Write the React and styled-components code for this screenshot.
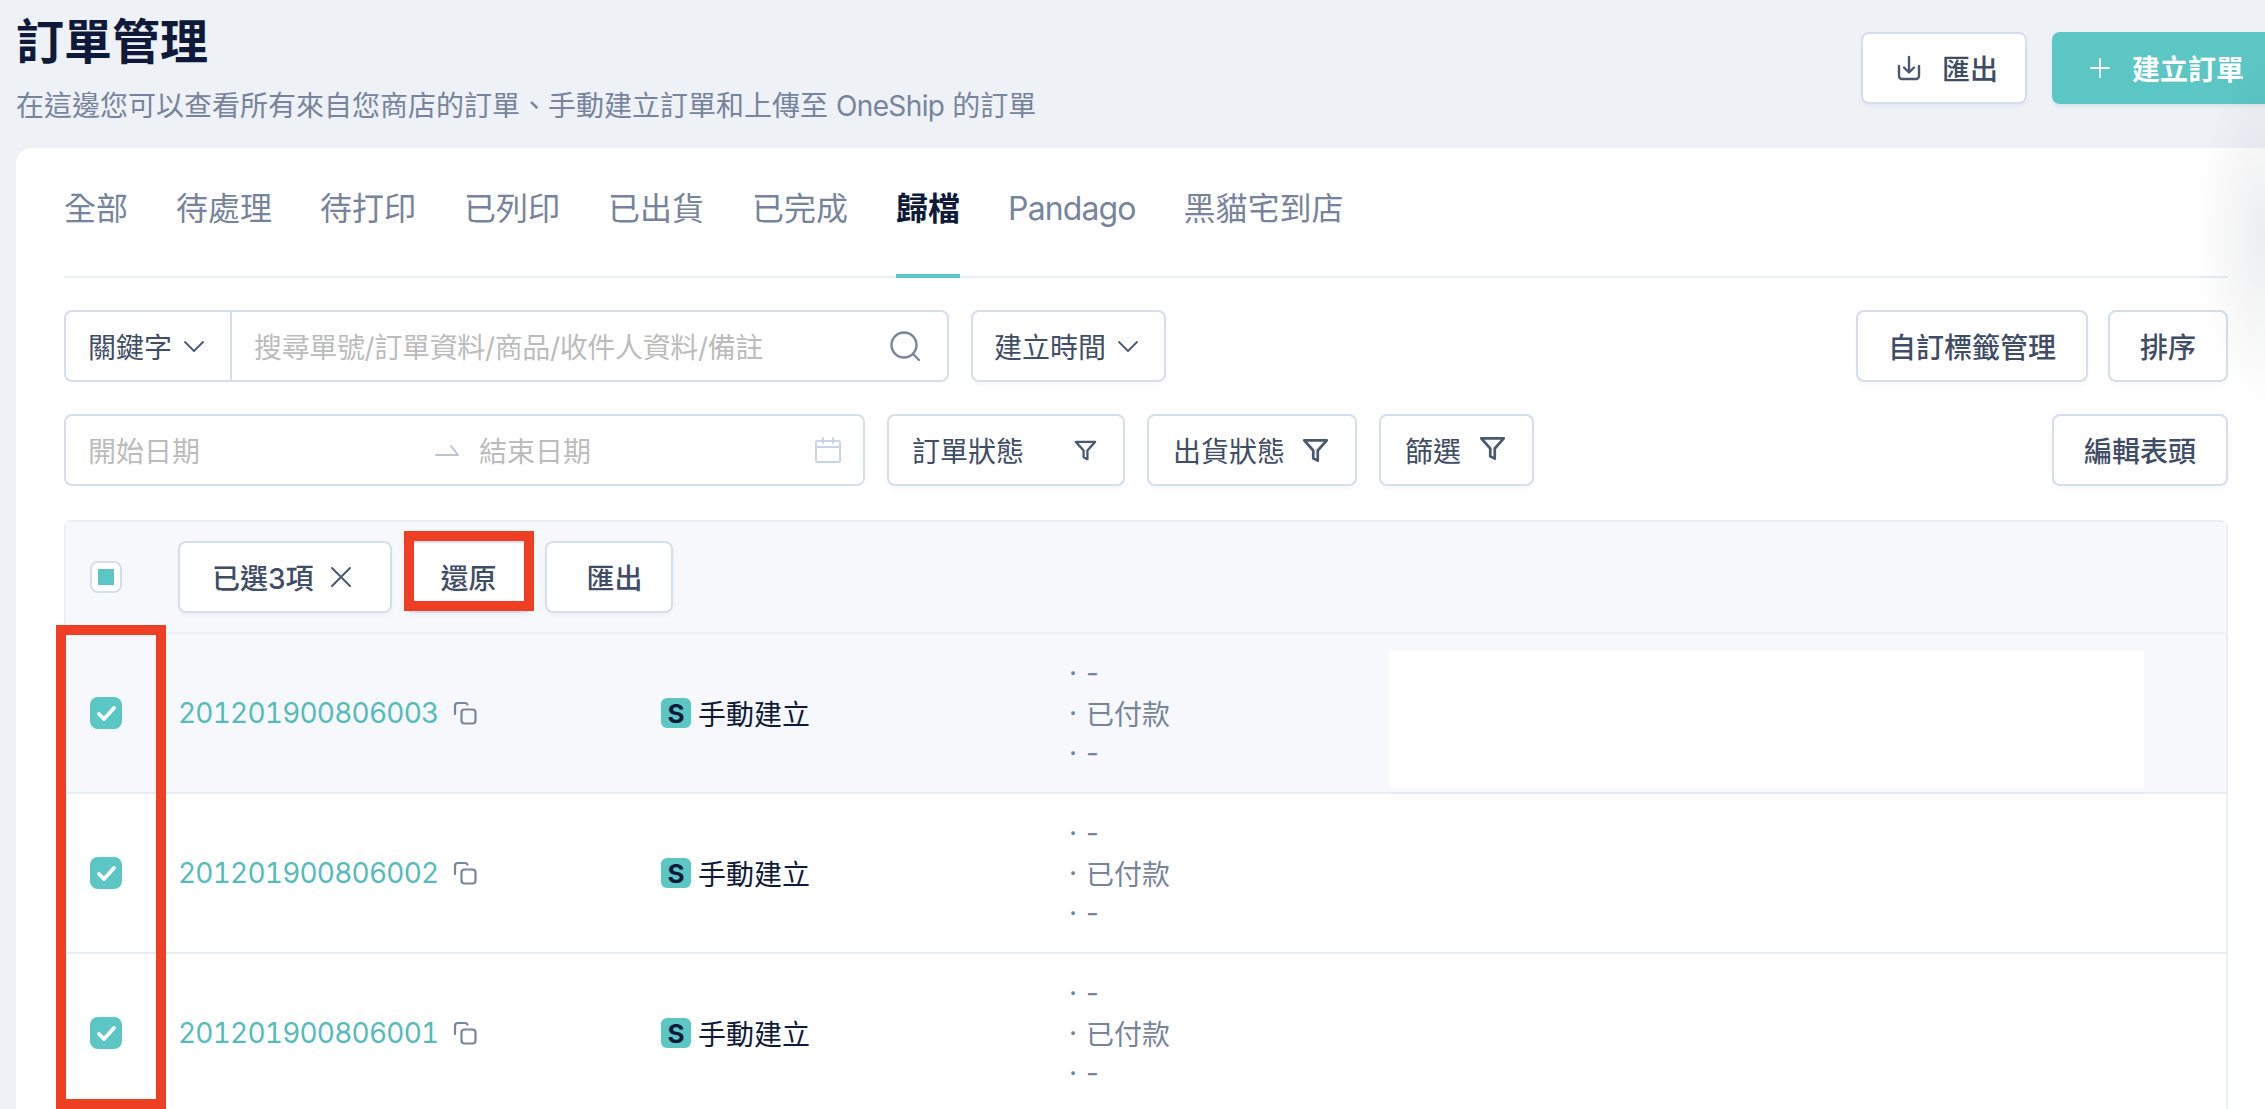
import React from "react";
import styled, { createGlobalStyle } from "styled-components";

const GlobalStyle = createGlobalStyle`
  html, body {
    margin: 0;
    padding: 0;
    background: #eef1f6;
  }
  body {
    font-family: Inter, "Noto Sans CJK TC", sans-serif;
    overflow: hidden;
  }
  * {
    box-sizing: border-box;
  }
`;

const Page = styled.div`
  position: relative;
  width: 2265px;
  height: 1109px;
  overflow: hidden;
  padding-left: 16px;
`;

const Inner = styled.div`
  width: 2260px;
`;

const Header = styled.header`
  display: flex;
  justify-content: space-between;
  height: 148px;
`;

const Title = styled.h1`
  margin: 10px 0 0;
  font-size: 48px;
  line-height: 64px;
  font-weight: 700;
  color: #0f1a3a;
`;

const Subtitle = styled.p`
  margin: 12px 0 0;
  font-size: 28px;
  line-height: 40px;
  color: #77849b;
  white-space: nowrap;
`;

const Latin = styled.span`
  letter-spacing: -0.6px;
`;

const HeaderActions = styled.div`
  display: flex;
  gap: 25px;
  padding-top: 32px;
`;

const Button = styled.button`
  display: flex;
  align-items: center;
  flex-shrink: 0;
  height: 72px;
  padding: 0 ${(p) => p.$right ?? 30}px 0 ${(p) => p.$left ?? 30}px;
  gap: ${(p) => p.$gap ?? 0}px;
  font-family: inherit;
  font-size: 28px;
  font-weight: ${(p) => p.$weight ?? 500};
  white-space: nowrap;
  color: #3f4d66;
  background: #fff;
  border: 2px solid #d5dfeb;
  border-radius: 8px;
  box-shadow: 0 3px 4px rgba(20, 40, 80, 0.03);
`;

const PrimaryButton = styled(Button)`
  color: #fff;
  background: #5bc6c4;
  border: 0;
  font-weight: 600;
  box-shadow: 0 3px 3px rgba(20, 40, 80, 0.06);
`;

const Card = styled.main`
  height: 961px;
  padding: 0 48px;
  background: #fff;
  border-radius: 16px 16px 0 0;
`;

const Tabs = styled.nav`
  display: flex;
  gap: 48px;
  height: 130px;
  border-bottom: 2px solid #e8eef5;
`;

const Tab = styled.div`
  height: 130px;
  padding-top: 41px;
  font-size: 32px;
  line-height: 40px;
  font-weight: ${(p) => (p.$active ? 700 : 400)};
  color: ${(p) => (p.$active ? "#0f1a3a" : "#77849b")};
  border-bottom: 4px solid ${(p) => (p.$active ? "#5bc6c4" : "transparent")};
  letter-spacing: ${(p) => (p.$latin ? "-0.9px" : "0")};
`;

const Toolbar = styled.div`
  display: flex;
  align-items: center;
  gap: 22px;
  margin-top: 32px;
`;

const RightGroup = styled.div`
  display: flex;
  gap: 20px;
  margin-left: auto;
`;

const SearchBox = styled.div`
  display: flex;
  align-items: center;
  width: 885px;
  height: 72px;
  border: 2px solid #d5dfeb;
  border-radius: 8px;
`;

const KeywordSelect = styled.div`
  display: flex;
  align-items: center;
  gap: 11px;
  width: 166px;
  height: 100%;
  padding-left: 22px;
  flex-shrink: 0;
  font-size: 28px;
  color: #3f4d66;
  border-right: 2px solid #d5dfeb;
`;

const SearchText = styled.div`
  flex: 1;
  padding-left: 22px;
  font-size: 28px;
  letter-spacing: -0.35px;
  color: #bcbcbc;
  white-space: nowrap;
`;

const SearchIcon = styled.svg`
  width: 32px;
  height: 32px;
  margin-right: 26px;
  fill: none;
  stroke: #7a869c;
  stroke-width: 2.4;
`;

const DateBox = styled.div`
  display: flex;
  align-items: center;
  width: 801px;
  height: 72px;
  padding: 0 22px;
  border: 2px solid #d5dfeb;
  border-radius: 8px;
`;

const DateStart = styled.div`
  width: 347px;
  font-size: 28px;
  color: #bcbcbc;
`;

const DateEnd = styled.div`
  flex: 1;
  padding-left: 20px;
  font-size: 28px;
  color: #bcbcbc;
`;

const Table = styled.section`
  margin-top: 34px;
  height: 600px;
  background: #fff;
  border: 2px solid #e8eef5;
  border-bottom: 0;
  border-radius: 8px 8px 0 0;
`;

const TableHead = styled.div`
  display: flex;
  align-items: center;
  height: 112px;
  background: #f6f8fb;
  border-bottom: 2px solid #eef1f6;
`;

const HeadCheckCell = styled.div`
  width: 112px;
  padding-left: 24px;
  flex-shrink: 0;
`;

const HeadActions = styled.div`
  display: flex;
  gap: 13px;
`;

const PartialCheck = styled.div`
  display: flex;
  align-items: center;
  justify-content: center;
  width: 32px;
  height: 32px;
  background: #fff;
  border: 2px solid #d5dfeb;
  border-radius: 8px;
  &::before {
    content: "";
    width: 16px;
    height: 16px;
    background: #5bc6c4;
  }
`;

const Row = styled.div`
  display: grid;
  grid-template-columns: 112px 483px 408px 320px 755px;
  height: 160px;
  align-items: center;
  background: ${(p) => (p.$hover ? "#f6f8fc" : "#fff")};
  border-bottom: 2px solid #e8eef5;
`;

const CheckCell = styled.div`
  padding-left: 24px;
`;

const CheckedBox = styled.div`
  width: 32px;
  height: 32px;
  background: #5bc6c4;
  border-radius: 8px;
`;

const OrderCell = styled.div`
  display: flex;
  align-items: center;
  gap: 15px;
`;

const OrderNumber = styled.a`
  font-size: 28px;
  font-variant-numeric: tabular-nums;
  letter-spacing: -0.8px;
  color: #55bcb9;
`;

const SourceCell = styled.div`
  display: flex;
  align-items: center;
  gap: 7px;
  font-size: 28px;
  color: #0f1a3a;
`;

const SourceBadge = styled.span`
  display: flex;
  align-items: center;
  justify-content: center;
  width: 30px;
  height: 30px;
  font-size: 26px;
  font-weight: 700;
  color: #0f1a3a;
  background: #5bc6c4;
  border-radius: 6px;
`;

const StatusList = styled.div`
  display: flex;
  flex-direction: column;
`;

const StatusLine = styled.div`
  display: flex;
  gap: 9px;
  height: 40px;
  align-items: center;
  font-size: 28px;
  color: #77849b;
`;

const Redaction = styled.div`
  align-self: start;
  width: 755px;
  height: 137px;
  margin-top: 17px;
  background: #fff;
`;

const Icon = styled.svg`
  width: ${(p) => p.$w}px;
  height: ${(p) => p.$h ?? p.$w}px;
  flex-shrink: 0;
  fill: none;
  stroke: ${(p) => p.$color ?? "#4a5870"};
  stroke-width: ${(p) => p.$stroke ?? 2};
  stroke-linecap: round;
  stroke-linejoin: round;
  margin-top: ${(p) => (p.$lift ? -p.$lift : 0)}px;
`;

const RedMark = styled.div`
  position: absolute;
  left: ${(p) => p.$x}px;
  top: ${(p) => p.$y}px;
  width: ${(p) => p.$w}px;
  height: ${(p) => p.$h}px;
  border: 10px solid #ee3f24;
  pointer-events: none;
`;

const EdgeShadow = styled.div`
  position: absolute;
  right: 0;
  top: 60px;
  width: 70px;
  height: 350px;
  background: radial-gradient(ellipse 70px 175px at right center, rgba(20, 30, 50, 0.08), transparent);
  pointer-events: none;
`;

const Chevron = () => (
  <Icon $w={22} $stroke={1.8} viewBox="0 0 22 22">
    <path d="M2 7l9 9 9-9" />
  </Icon>
);

const Funnel = ({ size = 27, lift = 0 }) => (
  <Icon $w={size} $lift={lift} viewBox="0 0 24 24" $stroke={2.4}>
    <path d="M2 3h20l-8 9v9l-4-2v-7z" />
  </Icon>
);

const CopyIcon = () => (
  <Icon $w={24} $color="#7a869c" viewBox="0 0 24 24" $stroke={2.2}>
    <rect x="8.5" y="8.5" width="14" height="14" rx="3" />
    <path d="M2 13V5a3 3 0 0 1 3-3h7a3 3 0 0 1 2.5 1.5" />
  </Icon>
);

const tabs = ["全部", "待處理", "待打印", "已列印", "已出貨", "已完成", "歸檔", "Pandago", "黑貓宅到店"];

const orders = [
  { id: "201201900806003", hover: true },
  { id: "201201900806002" },
  { id: "201201900806001" },
];

export default function App() {
  return (
    <>
      <GlobalStyle />
      <Page>
        <Inner>
          <Header>
            <div>
              <Title>訂單管理</Title>
              <Subtitle>
                在這邊您可以查看所有來自您商店的訂單、手動建立訂單和上傳至 <Latin>OneShip</Latin> 的訂單
              </Subtitle>
            </div>
            <HeaderActions>
              <Button $left={34} $right={27} $gap={21}>
                <Icon $w={24} $h={26} viewBox="0 0 24 26" $stroke={2.4}>
                  <path d="M2 11v10a3 3 0 0 0 3 3h14a3 3 0 0 0 3-3V11" />
                  <path d="M12 2v15M7 12.5l5 5 5-5" />
                </Icon>
                匯出
              </Button>
              <PrimaryButton $left={38} $right={32} $gap={22}>
                <Icon $w={20} $color="#fff" viewBox="0 0 20 20" $stroke={1.8}>
                  <path d="M10 1v18M1 10h18" />
                </Icon>
                建立訂單
              </PrimaryButton>
            </HeaderActions>
          </Header>

          <Card>
            <Tabs>
              {tabs.map((t) => (
                <Tab key={t} $active={t === "歸檔"} $latin={t === "Pandago"}>
                  {t}
                </Tab>
              ))}
            </Tabs>

            <Toolbar>
              <SearchBox>
                <KeywordSelect>
                  關鍵字
                  <Chevron />
                </KeywordSelect>
                <SearchText>搜尋單號/訂單資料/商品/收件人資料/備註</SearchText>
                <SearchIcon viewBox="0 0 32 32">
                  <circle cx="15" cy="15" r="12.5" />
                  <path d="M24 24l6 6" strokeLinecap="round" />
                </SearchIcon>
              </SearchBox>
              <Button $left={21} $right={25} $gap={11} $weight={400}>
                建立時間
                <Chevron />
              </Button>
              <RightGroup>
                <Button>自訂標籤管理</Button>
                <Button>排序</Button>
              </RightGroup>
            </Toolbar>

            <Toolbar>
              <DateBox>
                <DateStart>開始日期</DateStart>
                <Icon $w={24} $h={14} $color="#b9c6d8" viewBox="0 0 24 14" $stroke={2}>
                  <path d="M1 12h22L16 3" />
                </Icon>
                <DateEnd>結束日期</DateEnd>
                <Icon $w={26} $color="#c9d5e4" viewBox="0 0 26 26" $stroke={2}>
                  <rect x="1" y="4" width="24" height="21" rx="1.5" />
                  <path d="M1 10h24M8 1v5M18 1v5" />
                </Icon>
              </DateBox>
              <Button $left={23} $right={26} $gap={50} $weight={400}>
                訂單狀態
                <Funnel size={23} />
              </Button>
              <Button $left={24} $right={26} $gap={17} $weight={400}>
                出貨狀態
                <Funnel />
              </Button>
              <Button $left={24} $right={26} $gap={18} $weight={400}>
                篩選
                <Funnel lift={4} />
              </Button>
              <RightGroup>
                <Button>編輯表頭</Button>
              </RightGroup>
            </Toolbar>

            <Table>
              <TableHead>
                <HeadCheckCell>
                  <PartialCheck />
                </HeadCheckCell>
                <HeadActions>
                  <Button $left={32} $right={38} $gap={16}>
                    已選3項
                    <Icon $w={22} $stroke={2} viewBox="0 0 22 22">
                      <path d="M2 2l18 18M20 2L2 20" />
                    </Icon>
                  </Button>
                  <Button $left={34} $right={33}>還原</Button>
                  <Button $left={40} $right={28}>匯出</Button>
                </HeadActions>
              </TableHead>

              {orders.map((o) => (
                <Row key={o.id} $hover={o.hover}>
                  <CheckCell>
                    <CheckedBox>
                      <Icon $w={32} $color="#fff" $stroke={3.8} viewBox="0 0 32 32">
                        <path d="M9 17l5 5 10-11" />
                      </Icon>
                    </CheckedBox>
                  </CheckCell>
                  <OrderCell>
                    <OrderNumber>{o.id}</OrderNumber>
                    <CopyIcon />
                  </OrderCell>
                  <SourceCell>
                    <SourceBadge>S</SourceBadge>
                    手動建立
                  </SourceCell>
                  <StatusList>
                    <StatusLine>
                      <span>·</span>
                      <span>-</span>
                    </StatusLine>
                    <StatusLine>
                      <span>·</span>
                      <span>已付款</span>
                    </StatusLine>
                    <StatusLine>
                      <span>·</span>
                      <span>-</span>
                    </StatusLine>
                  </StatusList>
                  {o.hover && <Redaction />}
                </Row>
              ))}
            </Table>
          </Card>
        </Inner>

        <EdgeShadow />
        <RedMark $x={404} $y={531} $w={130} $h={80} />
        <RedMark $x={56} $y={625} $w={110} $h={484} />
      </Page>
    </>
  );
}
